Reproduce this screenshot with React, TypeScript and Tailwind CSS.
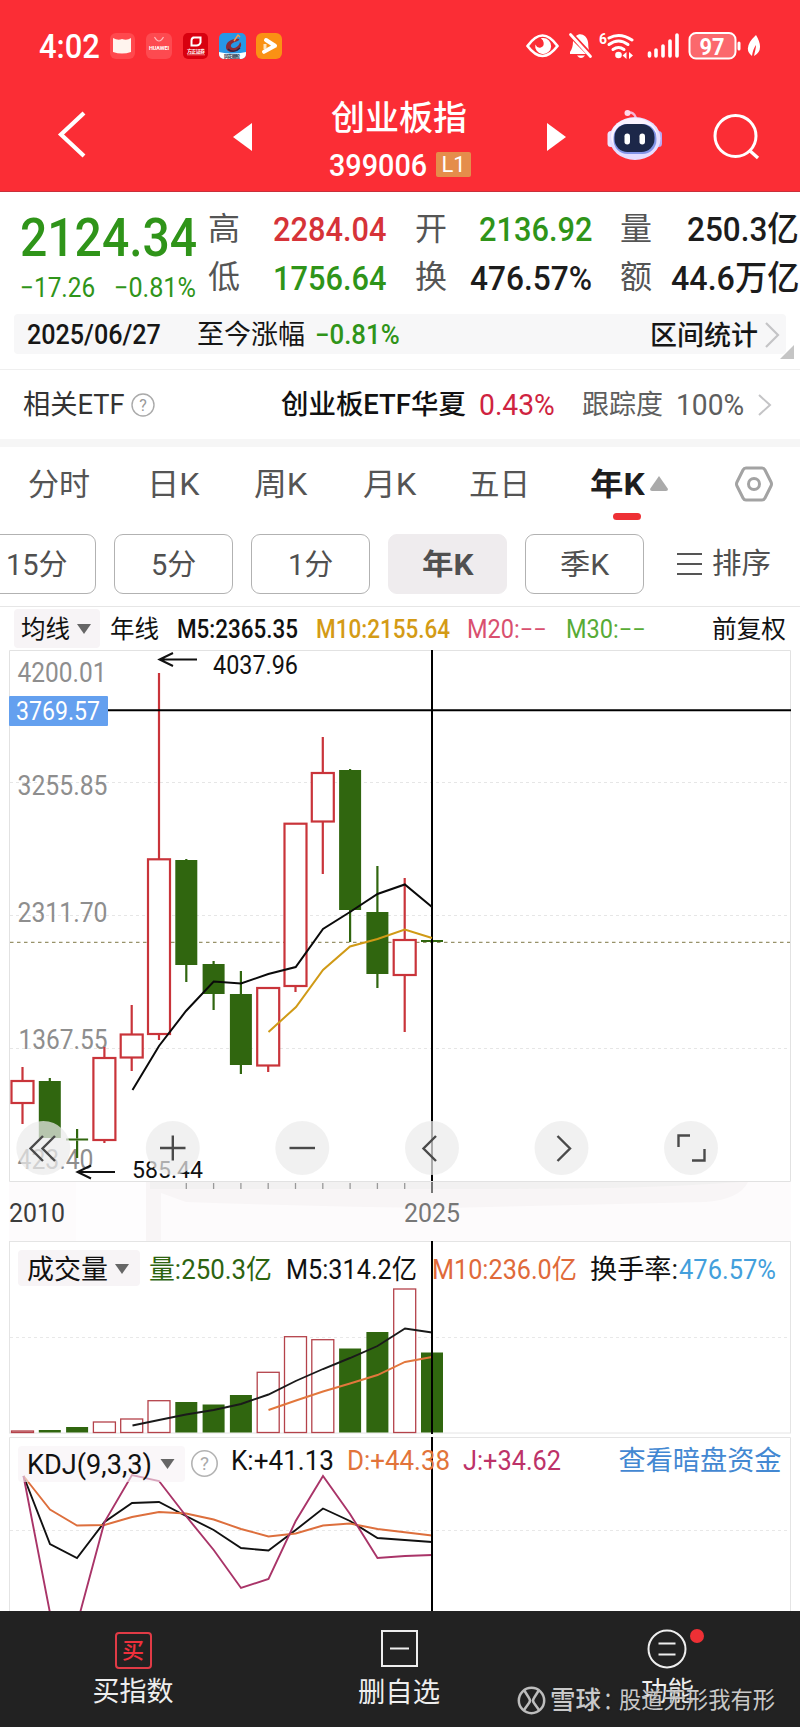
import { useLayoutEffect, useRef, useState } from "react";
import type { ReactNode } from "react";

/** One line of text condensed or widened to an exact width. */
function Fit({ w, className = "", children }: { w: number; className?: string; children: ReactNode }) {
  const ref = useRef<HTMLSpanElement>(null);
  const [scale, setScale] = useState(1);
  useLayoutEffect(() => {
    if (ref.current) setScale(w / ref.current.offsetWidth);
  }, [w]);
  return (
    <span className={`block shrink-0 whitespace-nowrap leading-none ${className}`} style={{ width: w }}>
      <span ref={ref} className="inline-block origin-left" style={{ transform: `scaleX(${scale})` }}>
        {children}
      </span>
    </span>
  );
}

type TProps = { x: number; y: number; w: number; s?: number; c?: string; weight?: number; children: string };
function T({ x, y, w, s = 26, c = "#111", weight = 400, children }: TProps) {
  return (
    <text x={x} y={y} fontSize={s} fill={c} fontWeight={weight} textLength={w} lengthAdjust="spacingAndGlyphs">
      {children}
    </text>
  );
}

const RED = "#c9343a";
const GREEN = "#30660f";
const cx = (i: number) => 22.5 + 27.3 * i;

type Candle = { up: boolean; top: number; bottom: number; high: number; low: number };
const candles: Candle[] = [
  { up: true, top: 1081, bottom: 1103, high: 1067, low: 1124 },
  { up: false, top: 1081, bottom: 1138, high: 1078, low: 1138 },
  { up: false, top: 1138.5, bottom: 1140.5, high: 1129, low: 1158 },
  { up: true, top: 1058, bottom: 1140, high: 1047, low: 1143 },
  { up: true, top: 1034.5, bottom: 1057.5, high: 1005, low: 1071 },
  { up: true, top: 859.3, bottom: 1034, high: 673, low: 1040 },
  { up: false, top: 860, bottom: 965, high: 859, low: 982 },
  { up: false, top: 964, bottom: 994, high: 961, low: 1010 },
  { up: false, top: 994, bottom: 1065, high: 971, low: 1074 },
  { up: true, top: 988, bottom: 1065.5, high: 987, low: 1072 },
  { up: true, top: 823.7, bottom: 986, high: 823, low: 992 },
  { up: true, top: 773, bottom: 821.5, high: 737, low: 874 },
  { up: false, top: 770, bottom: 910, high: 769, low: 942 },
  { up: false, top: 912, bottom: 974, high: 866, low: 988 },
  { up: true, top: 940, bottom: 975, high: 878, low: 1032 },
  { up: false, top: 940, bottom: 942, high: 940, low: 942 },
];

const volumes: [boolean, number][] = [
  [true, 1431], [false, 1430], [false, 1427], [true, 1422], [true, 1419], [true, 1400.7],
  [false, 1402], [false, 1404.5], [false, 1395], [true, 1372.3], [true, 1336.7], [true, 1339.7],
  [false, 1348.5], [false, 1332], [true, 1289], [false, 1352.5],
];

function StatusBar() {
  return (
    <div className="flex h-[92px] items-center">
      <Fit w={61} className="ml-[39px] text-[34px] font-medium">4:02</Fit>
      <svg className="ml-[10px] shrink-0" width="172" height="27" viewBox="110 33 172 27">
        <rect x="110" y="33" width="25" height="26" rx="6" fill="#ff484d" />
        <path d="M113 38q5 3 9 1q5 2 9-1v14q-9 3-18 0z" fill="#fff4ee" />
        <rect x="146" y="33" width="26" height="26" rx="6" fill="#fd4a50" />
        <path d="M154.500 37q4.500 8 9 0" fill="none" stroke="#ffb9bb" strokeWidth="1.200" />
        <text x="149" y="50" fontSize="5.500" fontWeight="700" fill="#fff" textLength="20">HUAWEI</text>
        <rect x="183" y="33" width="25" height="26" rx="5" fill="#d8000f" />
        <path d="M192.500 37.500h8v5q-1 3-4 3h-5v-5q0-3 3-3z" fill="none" stroke="#fff" strokeWidth="2" />
        <text x="187" y="53" fontSize="5" fontWeight="700" fill="#fff" textLength="18">方正证券</text>
        <path d="M187 54.800h18" stroke="#f7a7ab" strokeWidth=".7" />
        <rect x="219" y="33" width="27" height="26" rx="5" fill="#2797e6" />
        <path d="M219 52q13 3 27 0v2a5 5 0 0 1-5 5h-17a5 5 0 0 1-5-5z" fill="#fff" />
        <path d="M239 39c-7-1-13 3-13 8 0 6 10 7 14 1 2-3 1-5 0-6-1 4-4 6-7 6-4-1-2-5 2-6 3-1 5-2 4-3z" fill="#8b2b36" />
        <path d="M228 49c3 3 8 3 12-1" fill="none" stroke="#262547" strokeWidth="1.500" />
        <path d="M234 41l4-6 2 2" fill="none" stroke="#ff9b45" strokeWidth="1.400" />
        <text x="224" y="57.500" fontSize="4.500" fontWeight="700" fill="#132b45" textLength="16">同花顺股</text>
        <rect x="256" y="33" width="26" height="26" rx="6" fill="#fa9114" />
        <path d="M266 40l9 5.800-11 6" fill="none" stroke="#fff" strokeWidth="4" strokeLinecap="round" strokeLinejoin="round" />
        <path d="M265 44v5" stroke="#ffe4bf" strokeWidth="3" />
      </svg>
      <svg className="ml-auto mr-[38px] shrink-0" width="236" height="30" viewBox="526 31 236 30">
        <path d="M527.500 46q15-21 30 0q-15 20-30 0z" fill="none" stroke="#fff" strokeWidth="2.700" strokeLinejoin="round" />
        <path d="M543 38a8 8 0 1 1-7.700 6.500q2 4 5.500 3t2.800-5q-.2-2.500-2.800-4.200z" fill="#fff" />
        <path d="M576 36l13 14c-1-4-.5-5-1-8c-1-7-8-10-12-6z" fill="#fff" />
        <path d="M573 41c0 5-1 8-3 11v2h16zM577 55.500h8q-4 5-8 0z" fill="#fff" />
        <path d="M570.500 34.500l20 22" stroke="#fff" strokeWidth="2.800" strokeLinecap="round" />
        <text x="599" y="44" fontSize="14" fontWeight="700" fill="#fff" textLength="8" lengthAdjust="spacingAndGlyphs">6</text>
        <g fill="none" stroke="#fff" strokeWidth="3" strokeLinecap="round">
          <path d="M609 38q11-6 23 2" />
          <path d="M609 44.500q9.500-7 19 0" />
          <path d="M613 49.500q5.500-4 11 0" />
        </g>
        <circle cx="618.500" cy="55" r="3.300" fill="#fff" />
        <path d="M626.500 52v7l-4-3.500zM629 52v7l4-3.500z" fill="#fff" />
        <path d="M649.500 53v3M656 50v6M663 46v10M670 41v15M677 35v21" stroke="#fff" strokeWidth="3.600" strokeLinecap="round" />
        <rect x="689.500" y="33" width="46" height="25.500" rx="6.500" fill="#fb686d" stroke="#fff" strokeWidth="2" />
        <text x="699.500" y="54.500" fontSize="23" fontWeight="700" fill="#fff" textLength="25" lengthAdjust="spacingAndGlyphs">97</text>
        <path d="M739 43v6" stroke="#fff" strokeWidth="3" strokeLinecap="round" />
        <path d="M756 35q9 15-2 21c1-5 2-8 2-11q-3 4-4 11q-10-8 4-21z" fill="#fff" />
      </svg>
    </div>
  );
}

function NavBar() {
  return (
    <div className="flex h-[99px]">
      <svg className="ml-[57px] mt-[18px] shrink-0" width="30" height="50" viewBox="0 0 30 50">
        <path d="M27 3L4 24.500 27 46" fill="none" stroke="#fff" strokeWidth="4.200" />
      </svg>
      <svg className="ml-[146px] mt-[31px] shrink-0" width="20" height="28"><path d="M0 14L19 0v28z" fill="#fff" /></svg>
      <div className="ml-[76px] mr-[75px] flex w-[143px] shrink-0 flex-col">
        <Fit w={136} className="ml-[2px] mt-[9px] text-[34px] font-medium">创业板指</Fit>
        <div className="mt-[13px] flex">
          <Fit w={98} className="mt-px text-[32px] font-medium">399006</Fit>
          <div className="ml-[9px] mt-[4px] flex h-[25px] w-[35px] items-center justify-center rounded-[2px] bg-[#e58d4b] text-[22px] leading-none">L1</div>
        </div>
      </div>
      <svg className="mt-[31px] shrink-0" width="20" height="28"><path d="M0 0l19 14L0 28z" fill="#fff" /></svg>
      <svg className="ml-[40px] mt-[17px] shrink-0" width="56" height="52" viewBox="607 109 56 52">
        <path d="M627 113q7-2 9 5" fill="none" stroke="#f7b5d5" strokeWidth="2.500" />
        <circle cx="627.500" cy="113" r="3" fill="#ffd8eb" />
        <rect x="607.500" y="131" width="7" height="16" rx="3.500" fill="#eee4ff" />
        <rect x="655" y="131" width="7" height="16" rx="3.500" fill="#b8a9f5" />
        <ellipse cx="635" cy="138.500" rx="25.500" ry="21.500" fill="#e5ddff" />
        <ellipse cx="634" cy="136" rx="23" ry="18" fill="#faf3ff" />
        <rect x="613.500" y="124" width="43" height="30" rx="14" fill="#8294e7" />
        <rect x="614.500" y="124" width="40" height="28" rx="13" fill="#1c2749" />
        <rect x="624.500" y="133.500" width="5.500" height="11" rx="2.700" fill="#fff" />
        <rect x="639.500" y="133.500" width="5.500" height="11" rx="2.700" fill="#fff" />
      </svg>
      <svg className="ml-[50px] mt-[21px] shrink-0" width="48" height="48" viewBox="713 113 48 48">
        <circle cx="735.500" cy="136" r="20.500" fill="none" stroke="#fff" strokeWidth="3" />
        <path d="M749 150l9 8" stroke="#fff" strokeWidth="3.300" />
      </svg>
    </div>
  );
}

function Quote() {
  return (
    <div className="flex h-[122px] font-medium">
      <div className="ml-[20px] w-[188px] shrink-0 text-[#2f9419]">
        <Fit w={177} className="mt-[19px] text-[54px]">2124.34</Fit>
        <div className="mt-[10px] flex">
          <Fit w={75} className="text-[27px] font-normal">−17.26</Fit>
          <Fit w={82} className="ml-[19px] text-[27px] font-normal">−0.81%</Fit>
        </div>
      </div>
      <div className="flex flex-col gap-[16px] pt-[21px] text-[32px] font-normal text-[#555]">
        <Fit w={32}>高</Fit><Fit w={32}>低</Fit>
      </div>
      <div className="ml-[33px] flex w-[114px] flex-col gap-[15px] pt-[20px] text-[34px]">
        <Fit w={113} className="text-[#d63338]">2284.04</Fit><Fit w={113} className="text-[#2f9419]">1756.64</Fit>
      </div>
      <div className="ml-[28px] flex flex-col gap-[16px] pt-[21px] text-[32px] font-normal text-[#555]">
        <Fit w={32}>开</Fit><Fit w={32}>换</Fit>
      </div>
      <div className="ml-[23px] flex w-[122px] flex-col items-end gap-[15px] pt-[20px] text-[34px] text-[#1c1c1c]">
        <Fit w={113} className="text-[#2f9419]">2136.92</Fit><Fit w={122}>476.57%</Fit>
      </div>
      <div className="ml-[28px] flex flex-col gap-[16px] pt-[21px] text-[32px] font-normal text-[#555]">
        <Fit w={32}>量</Fit><Fit w={32}>额</Fit>
      </div>
      <div className="ml-[19px] flex w-[128px] flex-col items-end gap-[15px] pt-[20px] text-[34px] text-[#1c1c1c]">
        <Fit w={112}>250.3亿</Fit><Fit w={128}>44.6万亿</Fit>
      </div>
    </div>
  );
}

function DateBar() {
  return (
    <div className="relative mx-[14px] flex h-[40px] w-[772px] items-center rounded bg-[#f7f7f8] text-[#161616]">
      <Fit w={134} className="ml-[13px] mt-[2px] text-[27px] font-medium">2025/06/27</Fit>
      <Fit w={108} className="ml-[36px] mt-[2px] text-[27px]">至今涨幅</Fit>
      <Fit w={85} className="ml-[10px] mt-[2px] text-[27px] font-medium text-[#2f9419]">−0.81%</Fit>
      <Fit w={108} className="ml-[250px] mt-[5px] text-[27px] font-medium">区间统计</Fit>
      <svg className="ml-[6px] mt-[2px]" width="18" height="28"><path d="M2 2l12 12L2 26" fill="none" stroke="#c4c4c6" strokeWidth="2.200" /></svg>
      <svg className="absolute left-[766px] top-[31px]" width="14" height="14"><path d="M14 0v14H0z" fill="#c5c5c5" /></svg>
    </div>
  );
}

function EtfRow() {
  return (
    <div className="mt-[15px] flex h-[70px] items-center border-t border-[#efefef] pt-[2px]">
      <Fit w={102} className="ml-[23px] text-[27px] text-[#333]">相关ETF</Fit>
      <svg className="ml-[6px] -mt-[2px] shrink-0" width="24" height="24">
        <circle cx="12" cy="12" r="11" fill="none" stroke="#aaa" strokeWidth="1.400" />
        <text x="12" y="18" textAnchor="middle" fontSize="16" fill="#999">?</text>
      </svg>
      <Fit w={185} className="ml-[126px] text-[27px] font-medium text-[#111]">创业板ETF华夏</Fit>
      <Fit w={76} className="ml-[13px] text-[29px] text-[#cf2340]">0.43%</Fit>
      <Fit w={81} className="ml-[27px] text-[27px] text-[#5e5e5e]">跟踪度</Fit>
      <Fit w={68} className="ml-[13px] text-[29px] text-[#5e5e5e]">100%</Fit>
      <svg className="ml-[12px] -mt-[2px]" width="18" height="28"><path d="M3 4l11 10L3 24" fill="none" stroke="#c4c4c6" strokeWidth="2" /></svg>
    </div>
  );
}

function Periods() {
  const box = "flex h-[60px] shrink-0 items-center justify-center rounded-[9px] border";
  return (
    <>
      <div className="h-[8px] bg-[#f6f6f6]" />
      <div className="flex h-[86px] pt-[22px] text-[31px] text-[#555]">
        <Fit w={62} className="ml-[28px]">分时</Fit>
        <Fit w={52} className="ml-[57px]">日K</Fit>
        <Fit w={53} className="ml-[55px]">周K</Fit>
        <Fit w={53} className="ml-[56px]">月K</Fit>
        <Fit w={61} className="ml-[53px]">五日</Fit>
        <div className="ml-[60px] w-[55px]">
          <Fit w={55} className="font-bold text-[#1e1e1e]">年K</Fit>
          <div className="ml-[23px] mt-[13px] h-[7px] w-[28px] rounded-full bg-[#ee3035]" />
        </div>
        <svg className="ml-[5px] mt-[7px] shrink-0" width="18" height="15"><path d="M9 0l9 13q0 2-2 2H2q-2 0-2-2z" fill="#aaa" /></svg>
        <svg className="ml-[67px] -mt-[3px] shrink-0" width="38" height="36" viewBox="0 0 38 36">
          <path d="M11 2h16q2 0 3 2l6 12q1 2 0 4l-6 12q-1 2-3 2H11q-2 0-3-2L2 20q-1-2 0-4L8 4q1-2 3-2z" fill="none" stroke="#a3a3a3" strokeWidth="3" />
          <circle cx="19" cy="18" r="5.500" fill="none" stroke="#a3a3a3" strokeWidth="3" />
        </svg>
      </div>
      <div className="flex h-[74px] items-start overflow-hidden border-b border-[#e6e6e6] pt-[1px] text-[29px] text-[#505050]">
        <div className={`${box} -ml-[22px] w-[118px] border-[#b2b2b2] pt-[2px]`}><Fit w={62}>15分</Fit></div>
        <div className={`${box} ml-[18px] w-[119px] border-[#b2b2b2] pt-[2px]`}><Fit w={45}>5分</Fit></div>
        <div className={`${box} ml-[18px] w-[119px] border-[#b2b2b2] pt-[2px]`}><Fit w={45}>1分</Fit></div>
        <div className={`${box} ml-[18px] w-[119px] border-[#efecee] bg-[#efecee] pt-[2px] font-bold`}><Fit w={51}>年K</Fit></div>
        <div className={`${box} ml-[18px] w-[119px] border-[#b2b2b2] pt-[2px]`}><Fit w={49}>季K</Fit></div>
        <svg className="ml-[33px] mt-[18px] shrink-0" width="26" height="24"><path d="M0 2h25M0 12h25M0 22h25" stroke="#555" strokeWidth="2" /></svg>
        <Fit w={59} className="ml-[9px] mt-[16px]">排序</Fit>
      </div>
    </>
  );
}

function AverageBar() {
  return (
    <div className="flex h-[43px] items-center text-[25px] font-medium text-[#111]">
      <div className="ml-[14px] flex h-[39px] w-[86px] items-center rounded bg-[#f7f4f6] font-normal">
        <Fit w={49} className="ml-[7px] mt-[2px]">均线</Fit>
        <svg className="ml-[7px]" width="14" height="10"><path d="M0 0h14L7 10z" fill="#666" /></svg>
      </div>
      <Fit w={49} className="ml-[10px] mt-[2px] font-normal">年线</Fit>
      <Fit w={121} className="ml-[18px] mt-[2px]">M5:2365.35</Fit>
      <Fit w={134} className="ml-[18px] mt-[2px] text-[#d49b16]">M10:2155.64</Fit>
      <Fit w={80} className="ml-[17px] mt-[2px] font-normal text-[#d9506f]">M20:−−</Fit>
      <Fit w={80} className="ml-[19px] mt-[2px] font-normal text-[#58ab36]">M30:−−</Fit>
      <Fit w={74} className="ml-[66px] mt-[2px] font-normal">前复权</Fit>
    </div>
  );
}

function PriceChart() {
  return (
    <svg className="block" width="800" height="591" viewBox="0 650 800 591">
      <rect x="9" y="1182" width="782" height="59" fill="#fdfbfc" />
      <path d="M9 1182h137v59H76v-59z" fill="#fefdfe" />
      <path d="M146 1182h602q-8 17-42 20l-260 6q-120-1-260-6l-25-9v48h-15z" fill="#f8f5f6" />
      <path d="M150 1182h590q-90 7-240 7H150z" fill="#f2f1f1" />
      <path d="M9.500 1181.500V650.500h781v531z" fill="#fff" stroke="#e2e2e2" />
      <path d="M10 782.500h780M10 915.500h780M10 1048.500h780" stroke="#e6e6e6" strokeDasharray="3 3" />
      <path d="M10 942.300h780" stroke="#98926a" strokeWidth="1.200" strokeDasharray="3.500 3.500" />
      <T x={17.500} y={682} w={89} s={27} c="#8e8e8e">4200.01</T>
      <T x={17.500} y={795} w={90} s={27} c="#8e8e8e">3255.85</T>
      <T x={17.500} y={922} w={90} s={27} c="#8e8e8e">2311.70</T>
      <T x={18.500} y={1049} w={89} s={27} c="#8e8e8e">1367.55</T>
      <T x={17.500} y={1169} w={76} s={27} c="#8e8e8e">423.40</T>
      {candles.map((c, i) => {
        const color = c.up ? RED : GREEN;
        return (
          <g key={i} stroke={color} strokeWidth="2.200" fill={c.up ? "#fff" : GREEN}>
            <path d={`M${cx(i)} ${c.high}V${c.top}M${cx(i)} ${c.bottom}V${c.low}`} />
            {c.up ? (
              <rect x={cx(i) - 11} y={c.top} width="22" height={c.bottom - c.top} />
            ) : (
              <rect x={cx(i) - 11} y={c.top} width="22" height={c.bottom - c.top} stroke="none" />
            )}
          </g>
        );
      })}
      <path d="M108 710.300H791M432 650V1181" stroke="#000" strokeWidth="2" />
      <polyline points="132.500,1090 159,1046 186,1011 213.700,981.500 241,983.500 268.300,974 295.700,967 323,929 350,912 377.500,894 404.800,884.500 432,907" fill="none" stroke="#0a0a0a" strokeWidth="2" />
      <polyline points="268.500,1032 296,1007 323,970 350,946.500 377.500,939 404.800,929.500 432,938" fill="none" stroke="#d09a16" strokeWidth="2" />
      <rect x="9" y="696" width="99" height="30" rx="1" fill="#64a0ef" />
      <T x={16} y={720} w={84} s={25} c="#fff">3769.57</T>
      <T x={213} y={673.500} w={85} s={25}>4037.96</T>
      <T x={132} y={1178} w={71} s={24}>585.44</T>
      <path d="M197 659.500H160M173 653l-13.500 6.500 13.500 6.500M115 1172H78M91 1165.500L77.500 1172l13.500 6.500" fill="none" stroke="#111" strokeWidth="2" />
      {[43.3, 172.8, 302.3, 432, 561.5, 691].map((x) => (
        <circle key={x} cx={x} cy="1148" r="27" fill="#ebebeb" fillOpacity=".72" />
      ))}
      <g fill="none" stroke="#4a4a4a" strokeWidth="2.400">
        <path d="M43 1136l-12.500 12.500L43 1161M55 1136l-12.500 12.500L55 1161" />
        <path d="M160 1148h25.500M172.800 1135.500v25" />
        <path d="M289.500 1148h25.500" />
        <path d="M436 1136l-12.500 12.500L436 1161" />
        <path d="M557.500 1136l12.500 12.500-12.500 12.500" />
        <path d="M678.500 1147v-11.500H690M704.500 1149v11.500H692" />
      </g>
      {[6, 7, 8, 9, 10, 11, 12, 13, 14].map((i) => (
        <path key={i} d={`M${cx(i)} 1183v6`} stroke="#999" strokeWidth="1.300" />
      ))}
      <path d="M432 1182v11" stroke="#777" strokeWidth="2" />
      <T x={9} y={1222} w={56} s={26} c="#3c3c3c">2010</T>
      <T x={404} y={1222} w={56} s={26} c="#777">2025</T>
    </svg>
  );
}

function VolumeChart() {
  return (
    <svg className="block" width="800" height="196" viewBox="0 1241 800 196">
      <rect x="9.500" y="1241.500" width="781" height="191.500" fill="#fff" stroke="#e4e4e4" />
      <path d="M10 1337.500h780" stroke="#e8e8e8" strokeDasharray="3 3" />
      <rect x="18" y="1250" width="122" height="36" rx="4" fill="#f7f4f6" />
      <T x={27} y={1279} w={81} s={27}>成交量</T>
      <path d="M115 1264h14l-7 10z" fill="#666" />
      {volumes.map(([up, top], i) =>
        up ? (
          <rect key={i} x={cx(i) - 11} y={top} width="22" height={1432.5 - top} fill="#fff" stroke="#b4424a" strokeWidth="1.300" />
        ) : (
          <rect key={i} x={cx(i) - 11} y={top} width="22" height={1432.5 - top} fill={GREEN} />
        ),
      )}
      <polyline points="132.500,1425.500 159,1420 186,1414.500 213.700,1410 241,1404 268.500,1394.500 295.700,1381 323,1369 350,1358 377.500,1346 405,1328.500 432,1332.500" fill="none" stroke="#1a1a1a" strokeWidth="1.900" />
      <polyline points="268.500,1410 296,1400.500 323,1391.500 350,1383.500 377.500,1375 405,1362 432,1357" fill="none" stroke="#e2773c" strokeWidth="1.900" />
      <path d="M432 1241v193" stroke="#000" strokeWidth="2" />
      <T x={149} y={1279} w={123} s={27} c="#2d6410">量:250.3亿</T>
      <T x={286} y={1279} w={131} s={27}>M5:314.2亿</T>
      <T x={432} y={1279} w={145} s={27} c="#e06a3a">M10:236.0亿</T>
      <T x={590} y={1279} w={88} s={27}>换手率:</T>
      <T x={679} y={1279} w={97} s={27} c="#439fdc">476.57%</T>
    </svg>
  );
}

function KdjChart() {
  return (
    <svg className="block" width="800" height="174" viewBox="0 1437 800 174">
      <path d="M9.500 1611V1437.500h781V1611" fill="#fff" stroke="#e4e4e4" />
      <path d="M10 1530.500h780" stroke="#e8e8e8" strokeDasharray="3 3" />
      <g fill="none" strokeWidth="1.900">
        <polyline stroke="#111" points="23.500,1476 50,1544 77,1558 104.500,1522 132,1503 159,1502 186,1516 213.700,1530 241,1548 268.500,1550.500 295.700,1530 323,1508.500 350,1521 377.500,1538 432,1542" />
        <polyline stroke="#dd6f3d" points="23.500,1476 50,1509.500 77,1525.500 104.500,1525 132,1517 159,1512 186,1513.500 213.700,1519.500 241,1529 268.500,1536.500 295.700,1533.500 323,1525.500 350,1523.500 377.500,1529 432,1535.500" />
        <polyline stroke="#a93468" points="23.500,1476 50,1613 80,1613 104.500,1522 132,1475 159,1481 186,1516 213.700,1550 241,1588 268.500,1579 295.700,1521 323,1476 350,1514 377.500,1558 405,1556 432,1555" />
      </g>
      <rect x="18" y="1446" width="167" height="36" rx="4" fill="#f7f2f5" fillOpacity=".6" />
      <T x={27} y={1473.500} w={125} s={27}>KDJ(9,3,3)</T>
      <path d="M160.500 1459h14l-7 10z" fill="#666" />
      <circle cx="204.500" cy="1463.500" r="12.700" fill="none" stroke="#b3b3b3" strokeWidth="1.600" />
      <text x="204.500" y="1470" fontSize="19" textAnchor="middle" fill="#aaa">?</text>
      <path d="M432 1437v174" stroke="#000" strokeWidth="2" />
      <T x={231} y={1469.500} w={103} s={27}>K:+41.13</T>
      <T x={347} y={1469.500} w={103} s={27} c="#e2743a">D:+44.38</T>
      <T x={463} y={1469.500} w={98} s={27} c="#bd3268">J:+34.62</T>
      <T x={618.500} y={1469.500} w={163} s={27} c="#4388d2">查看暗盘资金</T>
    </svg>
  );
}

function BottomBar() {
  return (
    <div className="relative flex h-[116px] bg-[#222] text-[27px] text-[#eee]">
      <div className="ml-[92px] flex w-[82px] flex-col items-center pt-[21px]">
        <div className="flex h-[37px] w-[37px] items-center justify-center rounded-[4px] border-2 border-[#e03b46] text-[22px] font-medium leading-none text-[#f0303c]">买</div>
        <Fit w={81} className="mt-[10px]">买指数</Fit>
      </div>
      <div className="ml-[184px] flex w-[82px] flex-col items-center pt-[19px]">
        <svg width="37" height="37"><rect x="1" y="1" width="35" height="35" fill="none" stroke="#eee" strokeWidth="2" /><path d="M9 18.500h19" stroke="#eee" strokeWidth="2" /></svg>
        <Fit w={82} className="mt-[13px]">删自选</Fit>
      </div>
      <div className="relative ml-[200px] flex w-[54px] flex-col items-center pt-[18px]">
        <svg width="40" height="40"><circle cx="20" cy="20" r="18.500" fill="none" stroke="#eee" strokeWidth="2" /><path d="M11.500 14.500h17M11.500 25.500h17" stroke="#eee" strokeWidth="2" /></svg>
        <span className="absolute left-[50px] top-[18px] h-[14px] w-[14px] rounded-full bg-[#ee3035]" />
        <Fit w={53} className="mt-[10px]">功能</Fit>
      </div>
      <div className="absolute left-[517px] top-[75px] flex items-center text-[#c9c9c9] [text-shadow:0_0_2px_#222]">
        <svg width="29" height="29" viewBox="0 0 29 29" fill="none" stroke="#bdbdbd" strokeWidth="2.500">
          <circle cx="14.500" cy="14.500" r="12.700" />
          <path d="M7 4l5 8q2 2.500 0 5l-5 7M22 4l-5 8q-2 2.500 0 5l5 7" />
        </svg>
        <Fit w={51} className="ml-[4px] text-[25px] font-medium">雪球</Fit>
        <Fit w={20} className="ml-[2px] text-[24px]">：</Fit>
        <Fit w={156} className="-ml-[4px] text-[23px]">股道无形我有形</Fit>
      </div>
    </div>
  );
}

export default function App() {
  return (
    <div className="h-[1727px] w-[800px] overflow-hidden bg-white font-[Roboto,'Noto_Sans_CJK_SC',sans-serif]">
      <header className="h-[192px] border-b border-[#c9303a] bg-[#fb2d35] text-white">
        <StatusBar />
        <NavBar />
      </header>
      <Quote />
      <DateBar />
      <EtfRow />
      <Periods />
      <AverageBar />
      <PriceChart />
      <VolumeChart />
      <KdjChart />
      <BottomBar />
    </div>
  );
}
